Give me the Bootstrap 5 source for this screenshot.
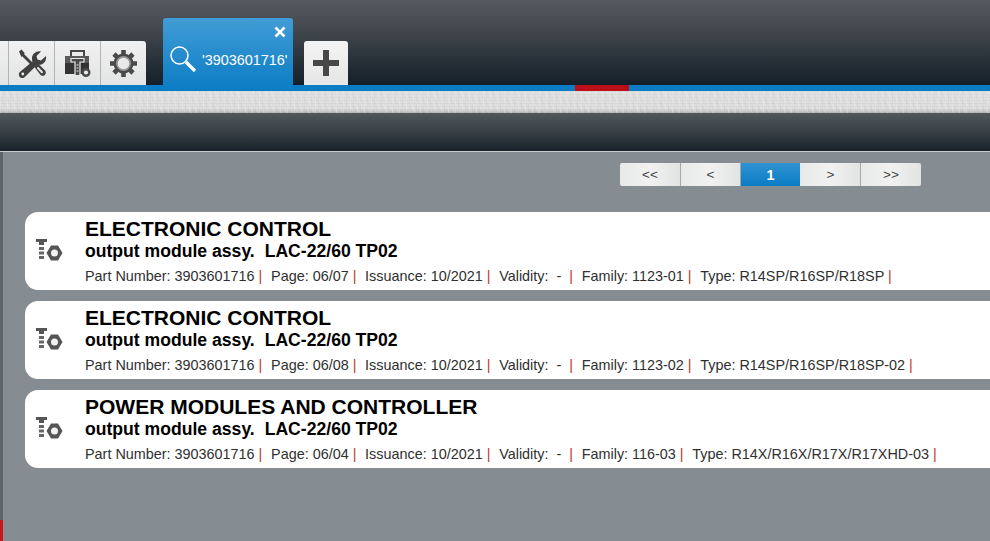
<!DOCTYPE html>
<html lang="en">
<head>
<meta charset="utf-8">
<title>Parts search</title>
<link href="https://cdn.jsdelivr.net/npm/bootstrap@5.3.0/dist/css/bootstrap.min.css" rel="stylesheet">
<style>
html,body{height:541px;overflow:hidden}
body{font-family:"Liberation Sans",Arial,sans-serif;background:#858d92;color:#111}
.topbar{height:85px;background:linear-gradient(#565a5f,#3b4248 45%,#141f29)}
.tool{height:44px;width:46px;background:linear-gradient(#f1f1f1,#e3e4e4);border-right:1px solid #b0b4b6}
.tool.stub{width:9px}
.tool.last{border-right:0;border-top-right-radius:3px;width:45px}
.tool svg{display:block}
.active-tab{width:130px;height:73px;margin-left:17px;margin-bottom:-6px;background:linear-gradient(#419cd6,#0b7cc4);border-radius:3px 3px 0 0;color:#fff;position:relative;z-index:2;font-size:14.4px;padding:30px 0 0 39px;line-height:24px;white-space:nowrap}
.tab-close{position:absolute;top:8px;right:7px;display:block}
.tab-glass{position:absolute;left:6px;top:27px;display:block}
.add-tab{width:44px;height:44px;margin-left:11px;background:linear-gradient(#f4f4f4,#e6e6e6);border-radius:3px 3px 0 0}
.bluebar{height:6px;background:#0b7cc4;position:relative}
.redmark{position:absolute;left:575px;top:0;width:54px;height:6px;background:#bb0f17}
.cloth{height:22px;background:repeating-linear-gradient(90deg,rgba(255,255,255,.16) 0 1px,transparent 1px 3px,rgba(130,130,130,.06) 3px 4px,transparent 4px 7px),repeating-linear-gradient(0deg,rgba(120,120,120,.07) 0 1px,transparent 1px 3px),repeating-linear-gradient(63deg,rgba(255,255,255,.2) 0 1px,transparent 1px 5px),linear-gradient(#e0e0e0,#dcdcdc 82%,#b4b4b4)}
.subbar{height:38px;background:linear-gradient(#52595c,#3a4247 45%,#17222a)}
.hairline{height:1px;background:#c6cbce}
.mainarea{height:389px;border-left:3px solid #5b646b;position:relative}
.sidered{position:absolute;left:-3px;top:368px;width:3px;height:21px;background:#c8161d}
.pager{padding:11px 69px 0 0;margin-bottom:26px}
.pg{width:60px;height:23px;line-height:24px;text-align:center;font-size:13.5px;color:#444;background:linear-gradient(90deg,#e8e9e9,#f1f1f1 50%,#e2e3e3);border-right:1px solid #a3a9ac}
.pg.first{width:61px;border-radius:2px 0 0 2px}
.pg.edge{border-right:0;border-radius:0 2px 2px 0}
.pg.on{background:linear-gradient(#2f93d2,#0b7cc4);color:#fff;font-weight:700;font-size:14.4px;border-right-color:#e6e7e7}
.result{height:78px;margin:0 -20px 11px 22px;background:#fff;border-radius:13px 0 0 13px;color:#000}
.result-icon{width:60px;flex:none;padding:27px 0 0 11px}
.result-icon svg{display:block}
.r-title{font-size:21px;font-weight:700;line-height:23px;margin-top:5px}
.r-sub{font-size:17.6px;font-weight:700;line-height:19px;margin-top:2px}
.r-sub span{margin-left:5px}
.r-meta{font-size:14.4px;line-height:16px;margin-top:7px;color:#2f2f2f;white-space:nowrap}
.r-meta i{font-style:normal;color:#c0392b;margin:0 8.7px 0 0}
</style>
</head>
<body>
<div class="topbar d-flex align-items-end">
  <div class="tool stub"></div>
  <div class="tool d-flex align-items-center justify-content-center">
    <svg width="30" height="30" viewBox="0 0 30 30"><path d="M2 3.500L4.500 1.500l3.300 3.800-.8.8L17.500 16.500l-2 2L5.200 8.300l-.8.8z" fill="#404040"/><path d="M29 8l-5 4.500-3.500-1-1-3.500L24 3.500c-4.500-1-9.500 2.500-9 7.500 0 1 .1 1.500.5 2.500L2.800 24c-1.500 1.700-1.200 3.700 0 5s3.500 1.500 5 0L20.500 16.500c4.500 1.500 9.500-2.500 8.500-8.500z" fill="#404040"/><circle cx="5.800" cy="26" r="1.400" fill="#eee"/><path d="M17.500 19l3.500-3.500 7 7c1.300 1.700.9 3.300-.2 4.400s-3 1.500-4.300.2z" fill="#404040"/><path d="M21 20l4 4.200" stroke="#e8e8e8" stroke-width="2" stroke-linecap="round"/></svg>
  </div>
  <div class="tool d-flex align-items-center justify-content-center">
    <svg width="28" height="28" viewBox="0 0 28 28"><path d="M7 7V2h13v5" fill="none" stroke="#4a4a4a" stroke-width="2"/><path d="M1 7h24v7H1z" fill="#5a5a5a"/><path d="M1 14h24v11H1z" fill="#333"/><path d="M7 9.500h13v3.500h-4v13.500h-5V13H7z" fill="#4a4a4a" stroke="#e9e9e9" stroke-width="1.200"/><path d="M12.500 16h2M12.500 19h2M12.500 22h2" stroke="#e9e9e9" stroke-width="1"/><circle cx="22" cy="23.500" r="3.300" fill="#e9e9e9" stroke="#4a4a4a" stroke-width="2.400"/></svg>
  </div>
  <div class="tool last d-flex align-items-center justify-content-center">
    <svg width="27" height="27" viewBox="0 0 27 27"><g stroke="#4a4a4a" stroke-width="4.600"><path d="M13.500 0v5M13.500 22v5M0 13.500h5M22 13.500h5M4 4l3.500 3.500M19.500 19.500L23 23M4 23l3.500-3.500M19.500 7.500L23 4"/></g><circle cx="13.500" cy="13.500" r="10" fill="#4a4a4a"/><circle cx="13.500" cy="13.500" r="7.500" fill="#979797"/><circle cx="13.500" cy="13.500" r="5.800" fill="#e9e9e9"/></svg>
  </div>
  <div class="active-tab">
    <svg class="tab-close" width="12" height="12" viewBox="0 0 12 12"><path d="M1.500 1.500l9 9M10.500 1.500l-9 9" stroke="#fff" stroke-width="2.600"/></svg>
    <svg class="tab-glass" width="28" height="28" viewBox="0 0 28 28"><circle cx="10.500" cy="10.500" r="8.500" fill="none" stroke="#fff" stroke-width="1.500"/><path d="M17 17l9 9" stroke="#fff" stroke-width="3.200"/></svg>
    '3903601716'
  </div>
  <div class="add-tab d-flex align-items-center justify-content-center">
    <svg width="26" height="26" viewBox="0 0 26 26"><path d="M10 0h6v10h10v6H16v10h-6V16H0v-6h10z" fill="#484848"/></svg>
  </div>
</div>
<div class="bluebar"><div class="redmark"></div></div>
<div class="cloth"></div>
<div class="subbar"></div>
<div class="hairline"></div>
<div class="mainarea">
  <div class="sidered"></div>
  <div class="pager d-flex justify-content-end">
    <div class="pg first">&lt;&lt;</div><div class="pg">&lt;</div><div class="pg on">1</div><div class="pg">&gt;</div><div class="pg edge">&gt;&gt;</div>
  </div>
  <div class="result d-flex">
    <div class="result-icon"><svg width="27" height="22" viewBox="0 0 27 22"><path d="M0 0h11v3H8v3H3V3H0z" fill="#555"/><path d="M3 8h5v3H3zM3 12.500h5v3H3zM3 17h5v3H3z" fill="#666"/><path d="M15 6.500h7l4.500 7.500-4.500 7.500h-7L10.500 14z" fill="#555"/><circle cx="18.500" cy="14" r="3.500" fill="#f1f1f1"/></svg></div>
    <div>
      <div class="r-title">ELECTRONIC CONTROL</div>
      <div class="r-sub">output module assy. <span>LAC-22/60 TP02</span></div>
      <div class="r-meta">Part Number: 3903601716<i> |</i>Page: 06/07<i> |</i>Issuance: 10/2021<i> |</i>Validity:&nbsp; -<i>&nbsp; |</i>Family: 1123-01<i> |</i>Type: R14SP/R16SP/R18SP<i> |</i></div>
    </div>
  </div>
  <div class="result d-flex">
    <div class="result-icon"><svg width="27" height="22" viewBox="0 0 27 22"><path d="M0 0h11v3H8v3H3V3H0z" fill="#555"/><path d="M3 8h5v3H3zM3 12.500h5v3H3zM3 17h5v3H3z" fill="#666"/><path d="M15 6.500h7l4.500 7.500-4.500 7.500h-7L10.500 14z" fill="#555"/><circle cx="18.500" cy="14" r="3.500" fill="#f1f1f1"/></svg></div>
    <div>
      <div class="r-title">ELECTRONIC CONTROL</div>
      <div class="r-sub">output module assy. <span>LAC-22/60 TP02</span></div>
      <div class="r-meta">Part Number: 3903601716<i> |</i>Page: 06/08<i> |</i>Issuance: 10/2021<i> |</i>Validity:&nbsp; -<i>&nbsp; |</i>Family: 1123-02<i> |</i>Type: R14SP/R16SP/R18SP-02<i> |</i></div>
    </div>
  </div>
  <div class="result d-flex">
    <div class="result-icon"><svg width="27" height="22" viewBox="0 0 27 22"><path d="M0 0h11v3H8v3H3V3H0z" fill="#555"/><path d="M3 8h5v3H3zM3 12.500h5v3H3zM3 17h5v3H3z" fill="#666"/><path d="M15 6.500h7l4.500 7.500-4.500 7.500h-7L10.500 14z" fill="#555"/><circle cx="18.500" cy="14" r="3.500" fill="#f1f1f1"/></svg></div>
    <div>
      <div class="r-title">POWER MODULES AND CONTROLLER</div>
      <div class="r-sub">output module assy. <span>LAC-22/60 TP02</span></div>
      <div class="r-meta">Part Number: 3903601716<i> |</i>Page: 06/04<i> |</i>Issuance: 10/2021<i> |</i>Validity:&nbsp; -<i>&nbsp; |</i>Family: 116-03<i> |</i>Type: R14X/R16X/R17X/R17XHD-03<i> |</i></div>
    </div>
  </div>
</div>
</body>
</html>
